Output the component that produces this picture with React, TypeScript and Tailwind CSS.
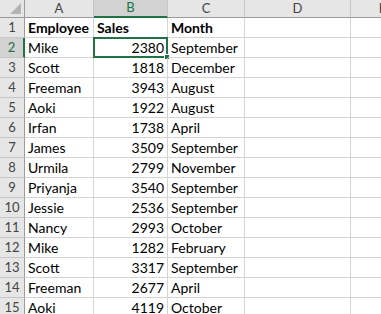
import { Fragment } from "react";

const rows: [string, string, string][] = [
  ["Mike", "2380", "September"],
  ["Scott", "1818", "December"],
  ["Freeman", "3943", "August"],
  ["Aoki", "1922", "August"],
  ["Irfan", "1738", "April"],
  ["James", "3509", "September"],
  ["Urmila", "2799", "November"],
  ["Priyanja", "3540", "September"],
  ["Jessie", "2536", "September"],
  ["Nancy", "2993", "October"],
  ["Mike", "1282", "February"],
  ["Scott", "3317", "September"],
  ["Freeman", "2677", "April"],
  ["Aoki", "4119", "October"],
];

const cols = ["A", "B", "C", "D", "E"];
const grid = "grid grid-cols-[25px_69px_74px_77px_106px_64px]";

function ColHeader({ label, selected }: { label: string; selected?: boolean }) {
  return (
    <div
      className={
        selected
          ? "flex h-[18px] items-center justify-center border-r border-b-2 border-r-[#c6c6c6] border-b-[#217346] bg-[#d2d2d2] text-[13px] text-[#217346]"
          : "flex h-[18px] items-center justify-center border-r border-b border-r-[#c6c6c6] border-b-[#9b9b9b] bg-[#e6e6e6] text-[13px] text-[#444]"
      }
    >
      {label}
    </div>
  );
}

function RowHeader({ n, selected }: { n: number; selected?: boolean }) {
  return (
    <div
      className={
        selected
          ? "flex h-[20px] items-center justify-center border-b border-r-2 border-b-[#c6c6c6] border-r-[#217346] bg-[#d2d2d2] text-[13px] text-[#217346]"
          : "flex h-[20px] items-center justify-center border-b border-r border-b-[#c6c6c6] border-r-[#9b9b9b] bg-[#e6e6e6] text-[13px] text-[#444]"
      }
    >
      {n}
    </div>
  );
}

function Cell({ children, right, bold, selected }: { children?: React.ReactNode; right?: boolean; bold?: boolean; selected?: boolean }) {
  return (
    <div
      className={`relative flex h-[20px] items-center overflow-visible whitespace-nowrap border-r border-b border-[#d4d4d4] px-[3px] text-[14px] text-black ${right ? "justify-end" : ""} ${bold ? "font-bold" : ""}`}
    >
      {children}
      {selected && (
        <div className="absolute -left-px -top-px h-[21px] w-[75px] border-2 border-[#217346]">
          <div className="absolute -bottom-[4px] -right-[4px] h-[6px] w-[6px] border border-white bg-[#217346]" />
        </div>
      )}
    </div>
  );
}

export default function App() {
  return (
    <div className="h-[314px] w-[381px] overflow-hidden bg-white font-['Lato','Liberation_Sans',sans-serif]">
      <div className={grid}>
        <div className="relative h-[18px] border-r border-b border-r-[#9b9b9b] border-b-[#9b9b9b] bg-[#e6e6e6]">
          <svg className="absolute bottom-[3px] right-[3px]" width="11" height="11" viewBox="0 0 11 11">
            <polygon points="11,0 11,11 0,11" fill="#b4b4b4" />
          </svg>
        </div>
        {cols.map((c) => (
          <ColHeader key={c} label={c} selected={c === "B"} />
        ))}

        <RowHeader n={1} />
        <Cell bold>Employee</Cell>
        <Cell bold>Sales</Cell>
        <Cell bold>Month</Cell>
        <Cell />
        <Cell />

        {rows.map(([name, sales, month], i) => (
          <Fragment key={i}>
            <RowHeader n={i + 2} selected={i === 0} />
            <Cell>{name}</Cell>
            <Cell right selected={i === 0}>
              {sales}
            </Cell>
            <Cell>{month}</Cell>
            <Cell />
            <Cell />
          </Fragment>
        ))}
      </div>
    </div>
  );
}
